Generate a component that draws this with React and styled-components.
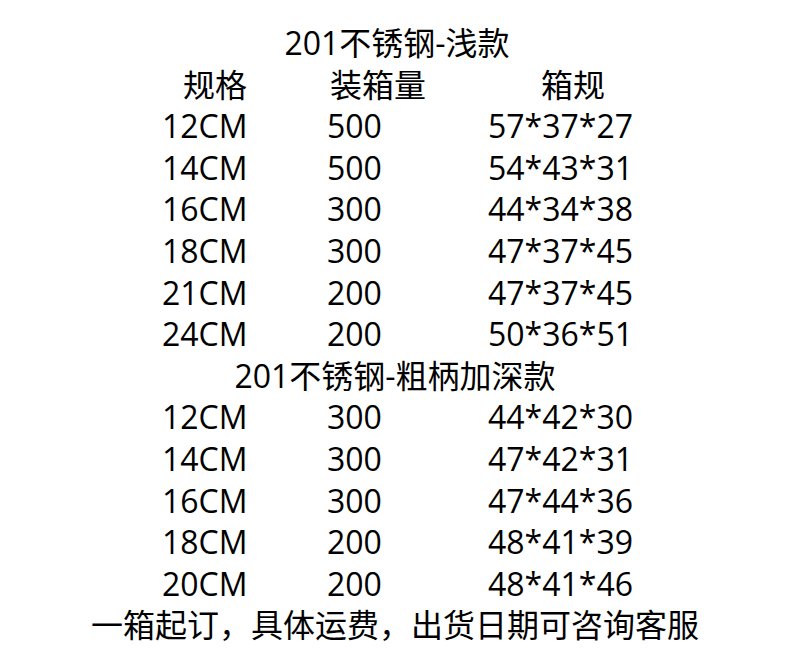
import React from "react";
import styled, { createGlobalStyle } from "styled-components";

const Global = createGlobalStyle`
  html, body { margin: 0; padding: 0; background: #fff; }
  body { font-family: "Open Sans", "Noto Sans CJK SC", sans-serif; color: #000; }
`;

const Page = styled.div`
  width: 790px;
  height: 664px;
  box-sizing: border-box;
  padding-top: 22px;
  background: #fff;
  font-size: 32px;
  line-height: 41.6px;
  overflow: hidden;
`;

const Title = styled.div`
  text-align: center;
  padding-left: ${(p) => p.$shift || 0}px;
  white-space: nowrap;
`;

const Row = styled.div`
  display: grid;
  grid-template-columns: 165px 161px auto;
  padding-left: 162px;
  white-space: nowrap;
`;

const Cell = styled.div`
  padding-left: ${(p) => p.$indent || 0}px;
`;

const Footer = styled.div`
  text-align: center;
  white-space: nowrap;
`;

const sec1 = [
  ["12CM", "500", "57*37*27"],
  ["14CM", "500", "54*43*31"],
  ["16CM", "300", "44*34*38"],
  ["18CM", "300", "47*37*45"],
  ["21CM", "200", "47*37*45"],
  ["24CM", "200", "50*36*51"],
];

const sec2 = [
  ["12CM", "300", "44*42*30"],
  ["14CM", "300", "47*42*31"],
  ["16CM", "300", "47*44*36"],
  ["18CM", "200", "48*41*39"],
  ["20CM", "200", "48*41*46"],
];

function DataRow({ r }) {
  return (
    <Row>
      <Cell>{r[0]}</Cell>
      <Cell>{r[1]}</Cell>
      <Cell>{r[2]}</Cell>
    </Row>
  );
}

export default function App() {
  return (
    <>
      <Global />
      <Page>
        <Title $shift={4}>201不锈钢-浅款</Title>
        <Row>
          <Cell $indent={21}>规格</Cell>
          <Cell $indent={3}>装箱量</Cell>
          <Cell $indent={53}>箱规</Cell>
        </Row>
        {sec1.map((r) => (
          <DataRow key={"a" + r[0]} r={r} />
        ))}
        <Title $shift={0}>201不锈钢-粗柄加深款</Title>
        {sec2.map((r) => (
          <DataRow key={"b" + r[0]} r={r} />
        ))}
        <Footer>一箱起订，具体运费，出货日期可咨询客服</Footer>
      </Page>
    </>
  );
}
